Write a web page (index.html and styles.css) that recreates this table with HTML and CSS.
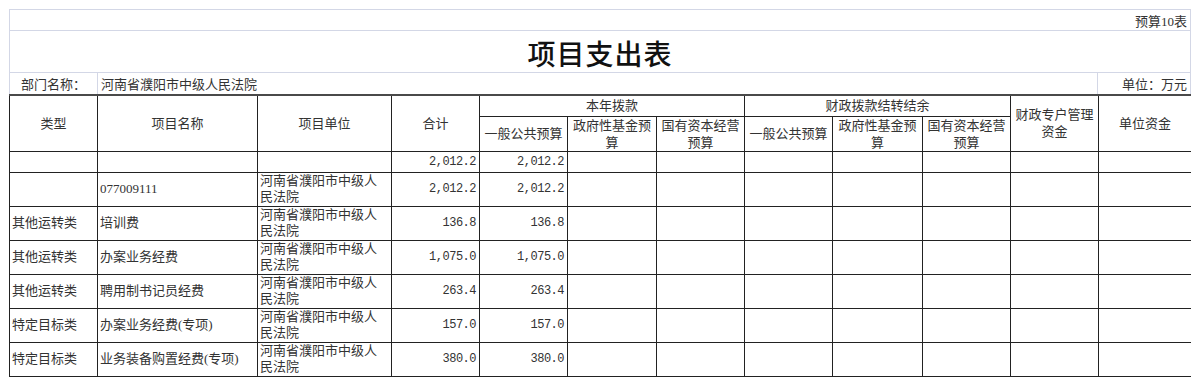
FILE: index.html
```html
<!DOCTYPE html>
<html lang="zh-CN">
<head>
<meta charset="utf-8">
<title>项目支出表</title>
<link rel="stylesheet" href="styles.css">
</head>
<body>
<div class="sheet">
  <div class="top">
    <div class="row-code">预算10表</div>
    <div class="row-title">项目支出表</div>
    <div class="row-dept">
      <div class="dept-label">部门名称：</div>
      <div class="dept-name">河南省濮阳市中级人民法院</div>
      <div class="dept-unit">单位：万元</div>
    </div>
  </div>
  <table class="grid">
    <colgroup>
      <col class="c88"><col class="c160"><col class="c134"><col class="c88">
      <col class="c88"><col class="c89"><col class="c88">
      <col class="c88"><col class="c90"><col class="c88">
      <col class="c88"><col class="c93">
    </colgroup>
    <thead>
      <tr class="h1">
        <th rowspan="2">类型</th>
        <th rowspan="2">项目名称</th>
        <th rowspan="2">项目单位</th>
        <th rowspan="2">合计</th>
        <th colspan="3">本年拨款</th>
        <th colspan="3">财政拨款结转结余</th>
        <th rowspan="2">财政专户管理资金</th>
        <th rowspan="2">单位资金</th>
      </tr>
      <tr class="h2">
        <th>一般公共预算</th>
        <th>政府性基金预算</th>
        <th>国有资本经营预算</th>
        <th>一般公共预算</th>
        <th>政府性基金预算</th>
        <th>国有资本经营预算</th>
      </tr>
    </thead>
    <tbody>
      <tr class="r-short">
        <td></td><td></td><td></td>
        <td class="num">2,012.2</td><td class="num">2,012.2</td>
        <td></td><td></td><td></td><td></td><td></td><td></td><td></td>
      </tr>
      <tr class="r-tall">
        <td></td><td class="code">077009111</td><td>河南省濮阳市中级人民法院</td>
        <td class="num">2,012.2</td><td class="num">2,012.2</td>
        <td></td><td></td><td></td><td></td><td></td><td></td><td></td>
      </tr>
      <tr class="r-tall">
        <td>其他运转类</td><td>培训费</td><td>河南省濮阳市中级人民法院</td>
        <td class="num">136.8</td><td class="num">136.8</td>
        <td></td><td></td><td></td><td></td><td></td><td></td><td></td>
      </tr>
      <tr class="r-tall">
        <td>其他运转类</td><td>办案业务经费</td><td>河南省濮阳市中级人民法院</td>
        <td class="num">1,075.0</td><td class="num">1,075.0</td>
        <td></td><td></td><td></td><td></td><td></td><td></td><td></td>
      </tr>
      <tr class="r-tall">
        <td>其他运转类</td><td>聘用制书记员经费</td><td>河南省濮阳市中级人民法院</td>
        <td class="num">263.4</td><td class="num">263.4</td>
        <td></td><td></td><td></td><td></td><td></td><td></td><td></td>
      </tr>
      <tr class="r-tall">
        <td>特定目标类</td><td>办案业务经费(专项)</td><td>河南省濮阳市中级人民法院</td>
        <td class="num">157.0</td><td class="num">157.0</td>
        <td></td><td></td><td></td><td></td><td></td><td></td><td></td>
      </tr>
      <tr class="r-tall">
        <td>特定目标类</td><td>业务装备购置经费(专项)</td><td>河南省濮阳市中级人民法院</td>
        <td class="num">380.0</td><td class="num">380.0</td>
        <td></td><td></td><td></td><td></td><td></td><td></td><td></td>
      </tr>
    </tbody>
  </table>
</div>
</body>
</html>
```
FILE: styles.css
```css
* { box-sizing: border-box; }
html, body { background: #ffffff; }
body {
  margin: 9px 9px 0 9px;
  font-family: "Liberation Serif", "Noto Sans CJK SC", serif;
  font-size: 13px;
  color: #333;
  overflow: hidden;
}
.sheet { width: 1182px; }

.top {
  border: 1px solid #d3d7e6;
  border-bottom: none;
}
.row-code {
  height: 21px;
  border-bottom: 1px solid #d3d7e6;
  display: flex;
  align-items: center;
  justify-content: flex-end;
  padding: 2px 3px 0 0;
  line-height: 17px;
}
.row-title {
  height: 42px;
  border-bottom: 1px solid #d3d7e6;
  display: flex;
  align-items: center;
  justify-content: center;
  font-size: 28px;
  font-weight: 500;
  letter-spacing: 1px;
  padding-top: 2px;
  color: #111;
}
.row-dept {
  height: 21px;
  display: flex;
  align-items: flex-end;
  line-height: 17px;
}
.dept-label {
  width: 88px;
  height: 100%;
  border-right: 1px solid #d3d7e6;
  display: flex;
  align-items: flex-end;
  justify-content: center;
  padding-bottom: 1px;
}
.dept-name {
  flex: 1;
  height: 100%;
  display: flex;
  align-items: flex-end;
  padding: 0 0 1px 3px;
}
.dept-unit {
  width: 93px;
  height: 100%;
  border-left: 1px solid #d3d7e6;
  display: flex;
  align-items: flex-end;
  justify-content: flex-end;
  padding: 0 3px 1px 0;
}

.grid {
  border-collapse: collapse;
  table-layout: fixed;
  width: 1182px;
  border-top: 2px solid #4a4a4a;
}
.c88 { width: 88px; }
.c89 { width: 89px; }
.c90 { width: 90px; }
.c93 { width: 93px; }
.c134 { width: 134px; }
.c160 { width: 160px; }

.grid th, .grid td {
  border: 1px solid #222;
  padding: 0 2px;
  line-height: 16px;
  vertical-align: middle;
  overflow: hidden;
}
.grid th {
  font-weight: normal;
  text-align: center;
  line-height: 17px;
}
.grid td { text-align: left; }
.grid td.num {
  text-align: right;
  font-family: "Liberation Mono", monospace;
  font-size: 12px;
  letter-spacing: -0.5px;
  padding-right: 3px;
}
.grid td.code { font-size: 13px; }

.h1 { height: 21px; }
.h2 { height: 35px; }
.r-short { height: 21px; }
.r-tall { height: 34px; }
```
